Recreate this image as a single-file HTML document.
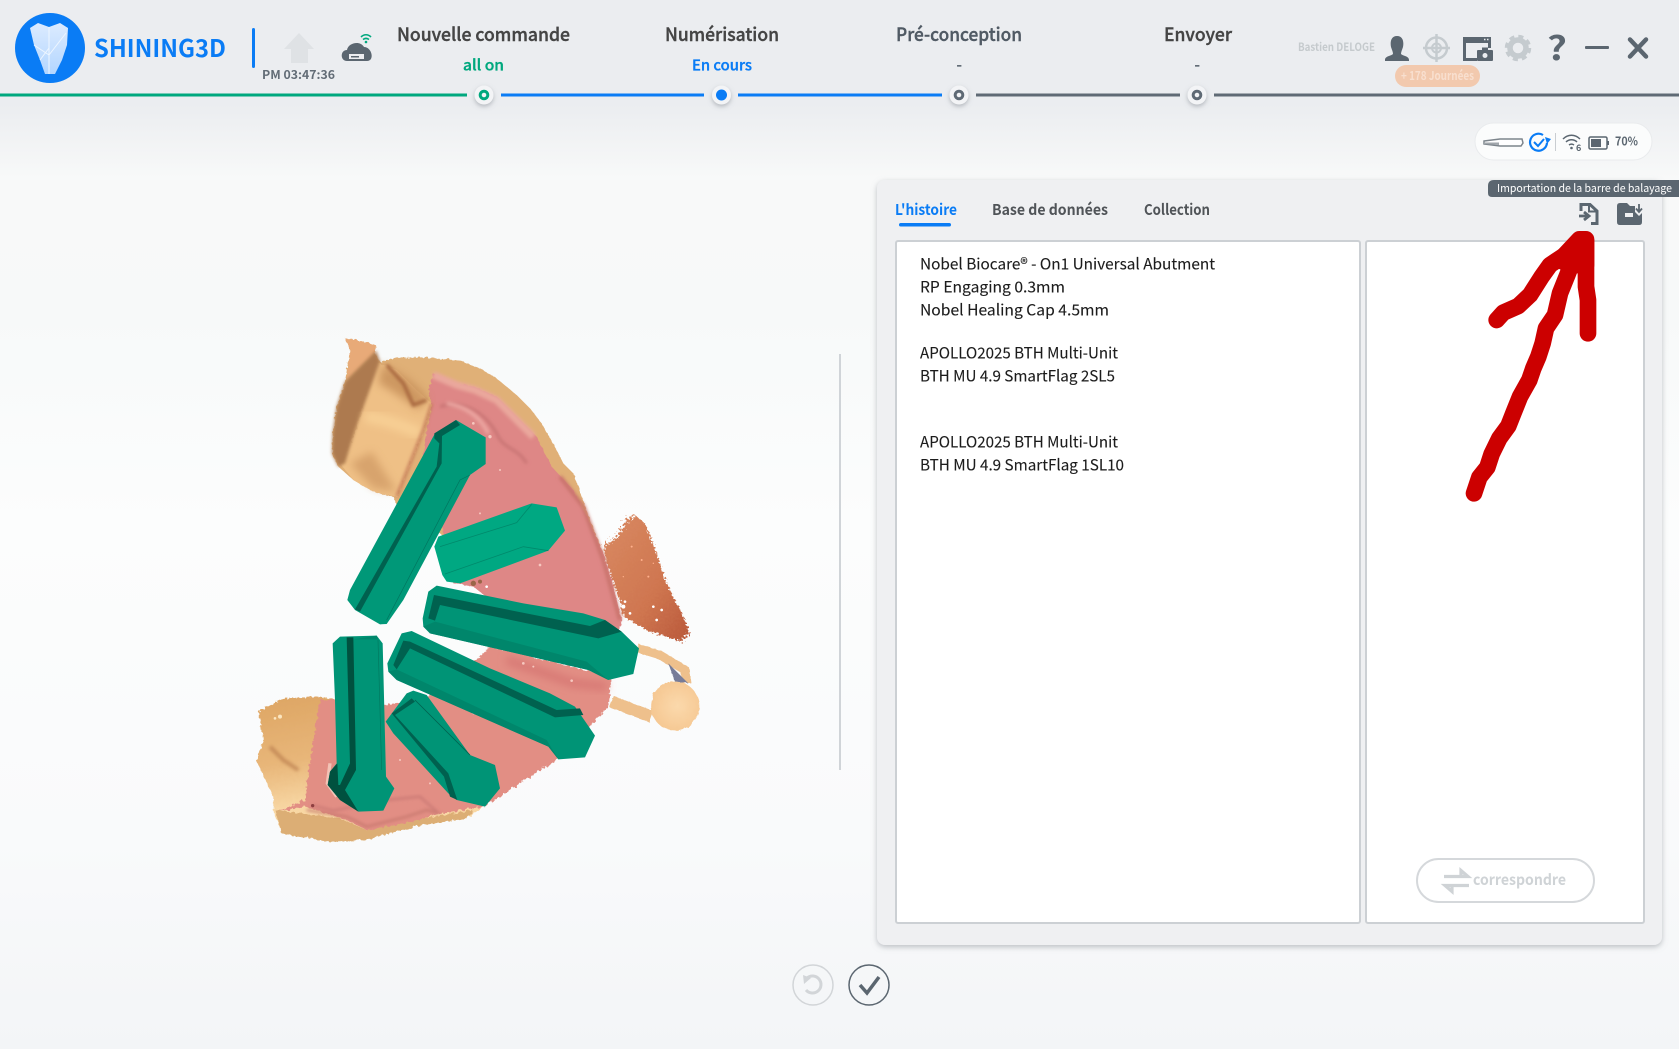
<!DOCTYPE html>
<html lang="fr"><head><meta charset="utf-8"><title>Shining3D</title>
<style>
html,body{margin:0;padding:0;width:1679px;height:1049px;overflow:hidden;background:#f4f5f7}
svg{display:block}
text{font-family:"Noto Sans CJK SC","Liberation Sans",sans-serif}
.t{font-weight:500;font-size:18px;stroke-width:.4px}
.s{font-weight:500;font-size:15px;stroke-width:.35px}
.b{font-size:15.5px;fill:#1c1c1c;stroke:#1c1c1c;stroke-width:.12px}
.tab{font-weight:700;font-size:15px;fill:#505458}
</style></head><body>
<svg width="1679" height="1049" viewBox="0 0 1679 1049" xmlns="http://www.w3.org/2000/svg">
<defs>
<linearGradient id="bg" gradientUnits="userSpaceOnUse" x1="0" y1="0" x2="0" y2="1049">
<stop offset="0" stop-color="#ebedf0"/><stop offset=".1" stop-color="#ebedf0"/><stop offset=".17" stop-color="#f8f9f9"/><stop offset=".3" stop-color="#f7f9f9"/><stop offset=".5" stop-color="#fcfdfd"/><stop offset=".8" stop-color="#f9fafb"/><stop offset="1" stop-color="#f3f5f7"/>
</linearGradient>
<linearGradient id="tooth" x1="0" y1="0" x2="0" y2="1"><stop offset="0" stop-color="#dcebff"/><stop offset="1" stop-color="#b3d6ff"/></linearGradient>
<linearGradient id="ltan" x1="0" y1="0" x2="0.3" y2="1"><stop offset="0" stop-color="#dda563"/><stop offset=".45" stop-color="#e8b679"/><stop offset=".75" stop-color="#f8d7a4"/><stop offset="1" stop-color="#f8d7a4"/></linearGradient>
<linearGradient id="redp" x1="0" y1="0" x2="1" y2="1"><stop offset="0" stop-color="#d98a62"/><stop offset=".6" stop-color="#cf7650"/><stop offset="1" stop-color="#b9583a"/></linearGradient>
<radialGradient id="ball" cx=".55" cy=".5" r=".6"><stop offset="0" stop-color="#fbd9ac"/><stop offset="1" stop-color="#f5c690"/></radialGradient>
<filter id="ps" x="-5%" y="-5%" width="110%" height="110%"><feDropShadow dx="0" dy="2" stdDeviation="3" flood-color="#8a9096" flood-opacity=".55"/></filter>
<filter id="ns" x="-60%" y="-60%" width="220%" height="220%"><feDropShadow dx="0" dy="2" stdDeviation="2.500" flood-color="#7a8088" flood-opacity=".5"/></filter>
<filter id="rough" x="-5%" y="-5%" width="110%" height="110%"><feTurbulence type="fractalNoise" baseFrequency=".09" numOctaves="2" seed="4"/><feDisplacementMap in="SourceGraphic" scale="14"/></filter>
<filter id="rough2" x="-10%" y="-10%" width="120%" height="120%"><feTurbulence type="fractalNoise" baseFrequency=".16" numOctaves="2" seed="7"/><feDisplacementMap in="SourceGraphic" scale="34"/></filter>
<filter id="soft" x="-20%" y="-20%" width="140%" height="140%"><feGaussianBlur stdDeviation="5"/></filter>
<filter id="soft2" x="-30%" y="-30%" width="160%" height="160%"><feGaussianBlur stdDeviation="13"/></filter>
<filter id="rougha" x="-10%" y="-10%" width="120%" height="120%"><feTurbulence type="fractalNoise" baseFrequency=".07" numOctaves="2" seed="9"/><feDisplacementMap in="SourceGraphic" scale="9"/></filter>
<filter id="arrowj" x="-10%" y="-10%" width="120%" height="120%"><feTurbulence type="fractalNoise" baseFrequency=".035" numOctaves="2" seed="3"/><feDisplacementMap in="SourceGraphic" scale="14"/></filter>
</defs>
<rect width="1679" height="1049" fill="url(#bg)"/>

<!-- logo -->
<circle cx="50" cy="48" r="35" fill="#0a7cf5"/>
<path d="M30 28 38 23 49 27 60 23 68 28 67 45 62 60 55 74 45 74 40 60 34 45Z" fill="url(#tooth)"/>
<path d="M49 27 49 74M34 45 49 55 66 33M40 60 49 48" stroke="#eef6ff" stroke-width="1" fill="none"/>
<text x="94" y="57" font-size="24" font-weight="700" fill="#0a7cf5" textLength="132" lengthAdjust="spacingAndGlyphs">SHINING3D</text>
<rect x="252" y="28" width="3" height="40" rx="1.500" fill="#0a7cf5"/>
<path d="M299 33 314 49H308V63H291V49H284Z" fill="#dfe2e5"/>
<text x="262" y="79" font-size="12" font-weight="700" fill="#626c76" textLength="73" lengthAdjust="spacingAndGlyphs">PM 03:47:36</text>
<path d="M347 61C340 61 340 50 347 50 348 43 360 40 364 47 372 47 375 61 367 61Z" fill="#5b6670"/>
<rect x="349" y="54" width="15" height="5" fill="#ecedf0"/><rect x="351" y="56" width="8" height="1.500" fill="#5b6670"/>
<path d="M361 37C364 34 368 34 371 37M363 39.500C365 38 367 38 369 39.500" stroke="#00a87e" stroke-width="1.600" fill="none"/><circle cx="366" cy="42" r="1.300" fill="#00a87e"/>

<text class="t" x="397" y="41" fill="#454545" stroke="#454545" textLength="173" lengthAdjust="spacingAndGlyphs">Nouvelle commande</text>
<text class="t" x="665" y="41" fill="#454545" stroke="#454545" textLength="114" lengthAdjust="spacingAndGlyphs">Numérisation</text>
<text class="t" x="896" y="41" fill="#505a64" stroke="#505a64" textLength="126" lengthAdjust="spacingAndGlyphs">Pré-conception</text>
<text class="t" x="1164" y="41" fill="#454545" stroke="#454545" textLength="68" lengthAdjust="spacingAndGlyphs">Envoyer</text>
<text class="s" x="463" y="70.500" fill="#00a87e" stroke="#00a87e" textLength="41" lengthAdjust="spacingAndGlyphs">all on</text>
<text class="s" x="692" y="70.500" fill="#0a7cf5" stroke="#0a7cf5" textLength="60" lengthAdjust="spacingAndGlyphs">En cours</text>
<text class="s" x="956.500" y="70" fill="#5b6670" stroke="#5b6670">-</text>
<text class="s" x="1194.500" y="70" fill="#5b6670" stroke="#5b6670">-</text>

<!-- progress -->
<rect x="0" y="93.500" width="467" height="3" fill="#00a87e"/>
<rect x="501" y="93.500" width="203" height="3" fill="#0a7cf5"/>
<rect x="738" y="93.500" width="204" height="3" fill="#0a7cf5"/>
<rect x="976" y="93.500" width="204" height="3" fill="#5f6a75"/>
<rect x="1214" y="93.500" width="465" height="3" fill="#5f6a75"/>
<g filter="url(#ns)"><circle cx="484" cy="95" r="9.500" fill="#f3f4f6"/></g><circle cx="484" cy="95" r="3.800" fill="none" stroke="#00a87e" stroke-width="3"/>
<g filter="url(#ns)"><circle cx="721.500" cy="95" r="9.500" fill="#f3f4f6"/></g><circle cx="721.500" cy="95" r="5.500" fill="#0a7cf5"/>
<g filter="url(#ns)"><circle cx="959" cy="95" r="9.500" fill="#f3f4f6"/></g><circle cx="959" cy="95" r="3.800" fill="none" stroke="#5f6a75" stroke-width="3"/>
<g filter="url(#ns)"><circle cx="1197" cy="95" r="9.500" fill="#f3f4f6"/></g><circle cx="1197" cy="95" r="3.800" fill="none" stroke="#5f6a75" stroke-width="3"/>

<!-- header right -->
<text x="1298" y="51" font-size="11" font-weight="700" fill="#c5cacd" textLength="77" lengthAdjust="spacingAndGlyphs">Bastien DELOGE</text>
<path d="M1397 36C1391 36 1390 42 1391 47 1392 50 1393 52 1393 54 1391 56 1385 56 1385 60V61H1409V60C1409 56 1403 56 1401 54 1401 52 1402 50 1403 47 1404 42 1403 36 1397 36Z" fill="#5b6670"/>
<g stroke="#c5cbcf" fill="none"><circle cx="1436.500" cy="48" r="10.500" stroke-width="2.500"/><circle cx="1436.500" cy="48" r="4.500" stroke-width="2"/><path d="M1436.500 34V62M1423 48H1450" stroke-width="2.500"/></g>
<path d="M1463 37H1491V48H1488V43H1466V58H1477V61H1463Z" fill="#5b6670"/><rect x="1477" y="50" width="16" height="11" rx="1" fill="#5b6670"/><rect x="1482" y="47.500" width="6" height="3" fill="#5b6670"/><circle cx="1485" cy="55.500" r="2.500" fill="#ebedf0"/><path d="M1484 39.500h1.500m1.500 0h1.500" stroke="#ebedf0" stroke-width="1.500"/>
<circle cx="1518" cy="48" r="8" fill="none" stroke="#c5cbcf" stroke-width="5.500"/><circle cx="1518" cy="48" r="11.500" fill="none" stroke="#c5cbcf" stroke-width="3.500" stroke-dasharray="5 4.030"/>
<text x="1547" y="60" font-size="33" font-weight="700" fill="#5b6670" textLength="20" lengthAdjust="spacingAndGlyphs">?</text>
<rect x="1585" y="46" width="24" height="3" rx="1" fill="#5b6670"/>
<path d="M1630 39.500 1646 56.500M1646 39.500 1630 56.500" stroke="#5b6670" stroke-width="4.500" stroke-linecap="round"/>
<rect x="1395" y="65" width="85" height="22" rx="11" fill="#f2c9ae"/>
<text x="1401" y="80" font-size="12" font-weight="700" fill="#f8dfcf" textLength="73" lengthAdjust="spacingAndGlyphs">+ 178 Journées</text>

<!-- status pill -->
<rect x="1475" y="123" width="177" height="37" rx="18.500" fill="#fbfcfc" stroke="#e9ebed"/>
<path d="M1484 141 1500 139H1522L1523 143 1521 146H1500L1484 144Z" fill="#fff" stroke="#7d858c" stroke-width="1.500"/><path d="M1484 142.500H1499V145L1484 144Z" fill="#a0a6ab"/>
<path d="M1547 143A8.500 8.500 0 1 1 1543 135" fill="none" stroke="#0a7cf5" stroke-width="2.200"/><path d="M1545 137 1551 139 1547 144Z" fill="#0a7cf5"/><path d="M1534 142 1538 146 1544 139" fill="none" stroke="#0a7cf5" stroke-width="2"/>
<rect x="1555" y="133" width="1" height="18" fill="#c9cdd1"/>
<path d="M1563 139C1568 134 1575 134 1580 139M1566 142C1569 139 1574 139 1577 142M1569 145C1570.500 144 1572.500 144 1574 145" stroke="#5b6670" stroke-width="1.500" fill="none"/><circle cx="1571.500" cy="148" r="1.300" fill="#5b6670"/>
<text x="1576" y="151" font-size="9" font-weight="700" fill="#5b6670">6</text>
<rect x="1589" y="137" width="18" height="12" rx="1.500" fill="none" stroke="#5b6670" stroke-width="1.500"/><rect x="1591" y="139" width="10" height="8" fill="#5b6670"/><rect x="1607.500" y="141" width="1.500" height="4" fill="#5b6670"/>
<text x="1615" y="145.500" font-size="12" font-weight="700" fill="#5b6670" textLength="23" lengthAdjust="spacingAndGlyphs">70%</text>

<!-- divider -->
<rect x="839" y="354" width="2" height="416" fill="#d0d4d8"/>

<!-- panel -->
<rect x="877" y="180" width="785" height="765" rx="8" fill="#eff0f2" filter="url(#ps)"/>
<rect x="896" y="241" width="464" height="682" rx="2" fill="#fff" stroke="#ccd0d4" stroke-width="2"/>
<rect x="1366" y="241" width="278" height="682" rx="2" fill="#fff" stroke="#ccd0d4" stroke-width="2"/>
<text class="tab" x="895" y="215" style="fill:#0a7cf5" textLength="62" lengthAdjust="spacingAndGlyphs">L'histoire</text>
<text class="tab" x="992" y="215" textLength="116" lengthAdjust="spacingAndGlyphs">Base de données</text>
<text class="tab" x="1144" y="215" textLength="66" lengthAdjust="spacingAndGlyphs">Collection</text>
<rect x="899" y="223" width="52" height="3.500" rx="1.750" fill="#0a7cf5"/>
<text class="b" x="920" y="269.300" textLength="295" lengthAdjust="spacingAndGlyphs">Nobel Biocare® - On1 Universal Abutment</text>
<text class="b" x="920" y="292.300" textLength="145" lengthAdjust="spacingAndGlyphs">RP Engaging 0.3mm</text>
<text class="b" x="920" y="315.300" textLength="189" lengthAdjust="spacingAndGlyphs">Nobel Healing Cap 4.5mm</text>
<text class="b" x="920" y="358.300" textLength="198" lengthAdjust="spacingAndGlyphs">APOLLO2025 BTH Multi-Unit</text>
<text class="b" x="920" y="381.300" textLength="195" lengthAdjust="spacingAndGlyphs">BTH MU 4.9 SmartFlag 2SL5</text>
<text class="b" x="920" y="447.300" textLength="198" lengthAdjust="spacingAndGlyphs">APOLLO2025 BTH Multi-Unit</text>
<text class="b" x="920" y="470.300" textLength="204" lengthAdjust="spacingAndGlyphs">BTH MU 4.9 SmartFlag 1SL10</text>

<!-- tooltip -->
<path d="M1488 186Q1488 180 1494 180H1679V197H1492Q1488 197 1488 193Z" fill="#5b6670"/>
<text x="1497" y="192" font-size="11" fill="#fff" textLength="175" lengthAdjust="spacingAndGlyphs">Importation de la barre de balayage</text>
<!-- import icons -->
<path d="M1581 211V204.500H1590L1597 211V223.500H1591" fill="none" stroke="#5b6670" stroke-width="3"/><path d="M1589 204V211.500H1597" fill="none" stroke="#5b6670" stroke-width="2"/><path d="M1579 216H1588M1584 212 1589 216 1584 220" fill="none" stroke="#5b6670" stroke-width="2.800"/>
<path d="M1617 206Q1617 203 1620 203H1627L1630 206H1635V212L1639 216 1642 213V222Q1642 225 1639 225H1620Q1617 225 1617 222Z" fill="#5b6670"/><rect x="1625" y="213" width="8" height="4" fill="#eff0f2"/><path d="M1639 204V211M1636 208.500 1639 212 1642 208.500" stroke="#5b6670" stroke-width="1.800" fill="none"/>

<!-- correspondre -->
<rect x="1417" y="859" width="177" height="43" rx="21.500" fill="#fff" stroke="#d5d8db" stroke-width="2"/>
<path d="M1444 876.500H1468L1461 870.500V875M1469 885.500H1445L1452 891.500V887" fill="none" stroke="#cfd3d6" stroke-width="3.200"/>
<text x="1473" y="885" font-size="15" font-weight="700" fill="#cfd3d6" textLength="93" lengthAdjust="spacingAndGlyphs">correspondre</text>

<!-- bottom buttons -->
<circle cx="813" cy="985" r="20" fill="none" stroke="#d2d5d8" stroke-width="1.500"/>
<path d="M807 978A8.500 8.500 0 1 1 806 990" fill="none" stroke="#d2d5d8" stroke-width="3"/><path d="M803 975 811 978 804 984Z" fill="#d2d5d8"/>
<circle cx="869" cy="985" r="20" fill="none" stroke="#5b6670" stroke-width="1.500"/>
<path d="M860 985 867 993 879 977" fill="none" stroke="#5b6670" stroke-width="3.500"/>

<!-- 3D model: coordinates from 3x crop of (240,320) -->
<g transform="translate(240,320) scale(.33333)">
 <!-- red patch -->
 <path d="M1090 680 1130 650 1160 600 1185 585 1215 610 1250 700 1280 790 1330 890 1350 940 1320 965 1220 930 1150 890 1140 840 1100 730Z" fill="url(#redp)" filter="url(#rough2)"/>
 <g filter="url(#rough)">
  <!-- upper tan -->
  <path d="M316 55 350 60 408 75 405 100 420 125 470 112 560 112 660 122 720 145 770 175 830 225 870 265 905 310 945 380 970 430 1000 460 1025 530 1050 600 1090 700 900 900 600 640 470 555 460 530 400 515 340 480 295 440 276 400 278 340 290 260 315 185 330 90Z" fill="#e0b077"/>
  <path d="M316 55 350 60 408 75 405 100 340 160 320 180 330 90Z" fill="#e8aa78"/>
  <!-- light tan -->
  <path d="M405 125 470 150 530 210 575 250 550 330 510 430 470 530 400 515 340 480 300 430 345 340Z" fill="#efc086"/>
  <!-- upper pink -->
  <path d="M565 215 580 160 640 190 700 200 770 230 830 290 890 350 935 440 1000 510 1050 610 1090 700 1120 800 1145 900 1140 940 800 880 700 800 640 790 610 640 580 520 550 400 575 250Z" fill="#de8786"/>
 </g>
 <!-- shading on upper tissue -->
 <path d="M408 92 420 125 345 330 315 430 295 440 276 400 278 340 290 260 315 185Z" fill="#ad7a4f" filter="url(#soft)"/>
 <path d="M425 135Q500 160 565 235L535 270Q470 220 415 190Z" fill="#c28a55" opacity=".75" filter="url(#soft2)"/>
 <path d="M440 135 490 190 520 255 560 240" fill="none" stroke="#a6653c" stroke-width="10" filter="url(#soft)"/>
 <path d="M375 290Q450 300 540 340" fill="none" stroke="#f8d095" stroke-width="34" filter="url(#soft2)"/>
 <path d="M330 430 395 395 470 515 400 505Z" fill="#c58c58" opacity=".55" filter="url(#soft2)"/>
 <path d="M575 250 550 330 510 430 470 530" fill="none" stroke="#c47a58" stroke-width="8" filter="url(#soft)"/>
 <path d="M580 165 650 195 705 210 770 240 830 300 880 350" fill="none" stroke="#eaa79c" stroke-width="22" filter="url(#soft)"/>
 <path d="M600 260C660 240 730 270 770 340 790 390 830 380 860 430" fill="none" stroke="#c97574" stroke-width="9" filter="url(#soft)"/>
 <path d="M620 250C680 260 720 290 745 340" fill="none" stroke="#eba5a0" stroke-width="12" filter="url(#soft)"/>
 <path d="M960 470 1030 560 1090 720 1140 900" fill="none" stroke="#c9736c" stroke-width="12" filter="url(#soft)"/>

 <g filter="url(#rough)">
  <!-- lower tan (y+840) -->
  <path d="M55 1175 130 1135 240 1130 290 1140 300 1400 400 1500 730 1460 680 1495 520 1520 380 1560 270 1565 125 1540 100 1470 100 1430 48 1320 70 1260Z" fill="url(#ltan)"/>
  <path d="M105 1470 300 1495 380 1530 520 1500 700 1470 680 1495 520 1520 380 1560 270 1565 125 1540Z" fill="#dcae74"/>
  <!-- lower pink (y+840) -->
  <path d="M715 1015 750 980 1115 1070 1105 1160 950 1320 730 1460 600 1480 520 1505 380 1530 320 1500 195 1460 120 1472 195 1440 205 1360 240 1140 290 1140 440 1155 560 1130Z" fill="#e28e84"/>
 </g>
 <path d="M90 1280 130 1320 175 1350" fill="none" stroke="#b97d4e" stroke-width="12" opacity=".7" filter="url(#soft)"/>
 <path d="M200 1470 320 1490 380 1520 500 1490 560 1470 600 1480" fill="none" stroke="#c4766c" stroke-width="6" filter="url(#soft)"/>
 <path d="M215 1455 280 1472 440 1440 540 1430 590 1475" fill="none" stroke="#c27270" stroke-width="5" filter="url(#soft)"/>
 <path d="M270 1330 262 1390 290 1430" fill="none" stroke="#f3c3b6" stroke-width="10"/>
 <circle cx="218" cy="1457" r="5" fill="#8e3f40"/>
 <path d="M800 1020 1000 1090 1100 1100" fill="none" stroke="#d67672" stroke-width="22" filter="url(#soft2)"/>
 <!-- string and ball -->
 <g filter="url(#rougha)">
  <path d="M1195 985 1260 1005 1335 1050 1340 1090" fill="none" stroke="#eec08c" stroke-width="26"/>
  <path d="M1285 1030 1345 1090 1305 1085Z" fill="#777c98"/>
  <path d="M1115 1145 1235 1190" fill="none" stroke="#eec08c" stroke-width="36"/>
  <circle cx="1305" cy="1158" r="73" fill="url(#ball)"/>
 </g>
 <!-- speckles -->
 <g fill="#f6c8c0">
  <circle cx="750" cy="350" r="5"/><circle cx="700" cy="310" r="4"/><circle cx="780" cy="450" r="3"/><circle cx="720" cy="580" r="3"/><circle cx="900" cy="735" r="4"/><circle cx="850" cy="1030" r="4"/><circle cx="995" cy="1082" r="4"/><circle cx="570" cy="1390" r="3"/><circle cx="880" cy="1040" r="3"/><circle cx="700" cy="1180" r="3"/><circle cx="480" cy="1320" r="3"/>
 </g>
 <g fill="#fbe6c0"><circle cx="120" cy="1190" r="6"/><circle cx="105" cy="1195" r="4"/></g>
 <g fill="#ffb08c"><circle cx="1205" cy="720" r="3"/><circle cx="1175" cy="680" r="3"/><circle cx="1225" cy="770" r="3"/><circle cx="1240" cy="730" r="2"/><circle cx="1150" cy="770" r="2"/></g>
 <g fill="#fff"><circle cx="1150" cy="860" r="6"/><circle cx="1240" cy="860" r="4"/><circle cx="1265" cy="870" r="4"/><circle cx="1155" cy="845" r="4"/><circle cx="1170" cy="880" r="4"/><circle cx="740" cy="800" r="4"/><circle cx="1250" cy="900" r="4"/></g>
 <g fill="#9a6648"><circle cx="700" cy="790" r="8"/><circle cx="720" cy="785" r="6"/></g>

 <!-- implant 1 -->
 <path d="M585 340 648 300 737 352 737 432 690 465 490 840 440 912 420 913 345 870 322 840 330 810Z" fill="#009878"/>
 <path d="M583 340 648 300 660 315 606 348 605 430 360 875 345 868 590 440 598 370 583 355Z" fill="#00614f"/>
 <path d="M690 465 660 480 440 900" fill="none" stroke="#00745e" stroke-width="2"/>
 <!-- implant 2 -->
 <path d="M595 650 875 550 950 562 975 632 925 692 660 790 620 785 607 765 583 680Z" fill="#00a882"/>
 <path d="M600 680 830 608 875 553M615 762 850 680 925 692" fill="none" stroke="#008a6c" stroke-width="2.500"/>
</g>
<g transform="translate(240,600) scale(.33333)">
 <!-- implant 3 -->
 <path d="M565 -25 590 -43 850 10 1030 40 1095 60 1145 95 1197 145 1180 222 1105 240 1045 210 570 100 550 80 548 55Z" fill="#009476"/>
 <path d="M582 -15 1050 78 1095 60 1145 95 1075 115 600 15 585 62 565 55Z" fill="#00614f"/>
 <path d="M585 65 1040 185 1105 240 1045 210 570 100 550 80Z" fill="#00866b"/>
 <!-- implant 4 -->
 <path d="M442 190 485 100 515 93 750 205 930 280 1005 320 1065 407 1035 472 955 478 925 440 470 240 445 215Z" fill="#009476"/>
 <path d="M490 122 510 125 950 330 1020 325 1030 345 945 352 510 145 470 208 460 195Z" fill="#00614f"/>
 <path d="M470 208 920 420 955 478 925 440 470 240 445 215Z" fill="#00866b"/>
 <!-- implant 5 -->
 <path d="M437 365 500 280 520 272 560 285 690 465 765 495 780 565 735 620 650 600 625 580 460 400Z" fill="#009476"/>
 <path d="M455 340 515 295 525 305 465 345 625 520 652 600 630 590 612 530Z" fill="#00614f"/>
 <path d="M525 300 690 465" stroke="#00614f" stroke-width="2.500" fill="none"/>
 <!-- implant 6 -->
 <path d="M278 130 300 110 410 107 428 130 438 530 463 565 430 632 355 635 300 600 263 555 270 515 290 490 285 300Z" fill="#009476"/>
 <path d="M320 112 340 112 348 510 315 570 355 635 300 600 263 555 270 515 292 490 295 555 300 555 330 490Z" fill="#00513f"/>
 <path d="M340 118 410 107 415 118Z" fill="#00866b"/>
 <path d="M414 120 425 510" stroke="#007a60" stroke-width="2" fill="none"/>
</g>

<!-- red arrow -->
<g transform="translate(1450,220) scale(.33333)" fill="none" stroke="#cc0000" stroke-width="50" stroke-linecap="round" stroke-linejoin="round">
 <path d="M72 820 88 772 112 742 125 702 148 655 175 618 190 580 210 530 238 480 250 445 265 410 278 370 288 325 315 285 330 220 352 165 385 80"/>
 <path d="M140 300 160 278 205 258 240 225 275 170 300 135 345 105 390 62"/>
 <path d="M408 62 408 200 414 240 414 340"/>
 <path d="M388 58 408 58 408 135 360 135 330 120Z" fill="#cc0000"/>
</g>
</svg>
</body></html>
